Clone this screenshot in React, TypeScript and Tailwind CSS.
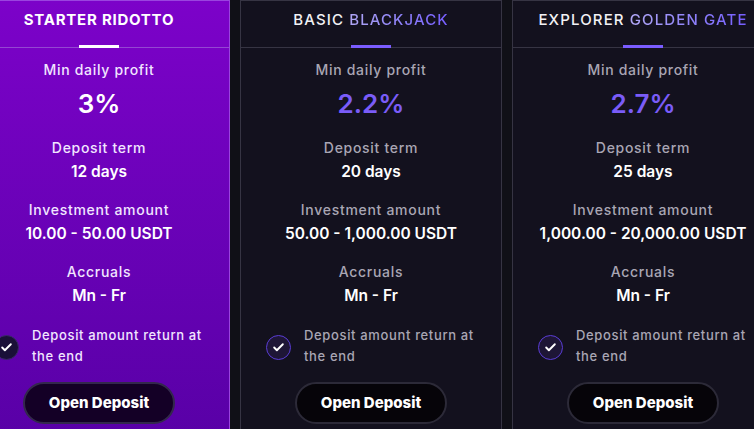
import { Check } from "lucide-react";

type Plan = {
  first: string;
  rest: string;
  profit: string;
  term: string;
  amount: string;
  active?: boolean;
};

const plans: Plan[] = [
  { first: "STARTER", rest: "RIDOTTO", profit: "3%", term: "12 days", amount: "10.00 - 50.00 USDT", active: true },
  { first: "BASIC", rest: "BLACKJACK", profit: "2.2%", term: "20 days", amount: "50.00 - 1,000.00 USDT" },
  { first: "EXPLORER", rest: "GOLDEN GATE", profit: "2.7%", term: "25 days", amount: "1,000.00 - 20,000.00 USDT" },
];

function Row({ label, value, active }: { label: string; value: string; active?: boolean }) {
  return (
    <div className="flex flex-col items-center gap-[4px] mt-[18px]">
      <div
        className={`text-[14px] leading-[20px] font-medium tracking-[0.05em] ${active ? "text-[#f1e6ff]" : "text-[#a9a6b4]"}`}
      >
        {label}
      </div>
      <div className="text-[15.5px] leading-[20px] font-semibold text-white">{value}</div>
    </div>
  );
}

function Card({ plan }: { plan: Plan }) {
  const a = plan.active;
  return (
    <div
      className={`w-[262px] shrink-0 h-[470px] border flex flex-col ${
        a
          ? "bg-gradient-to-b from-[#7c02c9] to-[#5600a4] border-[#9a44df]"
          : "bg-[#13111e] border-[#363443]"
      }`}
    >
      <div
        className={`relative h-[47px] flex justify-center pt-[9px] border-b ${
          a ? "border-[#9447d2]" : "border-[#363443]"
        }`}
      >
        {a ? (
          <div className="text-[15px] leading-[20px] font-bold tracking-[0.05em] text-white">
            {plan.first} {plan.rest}
          </div>
        ) : (
          <div className="text-[15px] leading-[20px] font-medium tracking-[0.075em] text-[#f2f2f5]">
            {plan.first}{" "}
            <span className="bg-gradient-to-r from-[#b0a6f4] to-[#765cff] bg-clip-text text-transparent">
              {plan.rest}
            </span>
          </div>
        )}
        <div
          className={`absolute bottom-[-1px] left-1/2 -translate-x-1/2 w-10 h-[3px] ${
            a ? "bg-white" : "bg-[#7a5cff]"
          }`}
        />
      </div>

      <div className="flex flex-col items-center pt-[12px]">
        <div
          className={`text-[14px] leading-[20px] font-medium tracking-[0.05em] ${a ? "text-[#f1e6ff]" : "text-[#a9a6b4]"}`}
        >
          Min daily profit
        </div>
        <div
          className={`mt-[8px] text-[26px] leading-[32px] font-semibold ${a ? "text-white" : "text-[#7a5cf8]"}`}
        >
          {plan.profit}
        </div>
      </div>

      <Row label="Deposit term" value={plan.term} active={a} />
      <Row label="Investment amount" value={plan.amount} active={a} />
      <Row label="Accruals" value="Mn - Fr" active={a} />

      <div className="flex items-start gap-[13px] pl-[25px] mt-[19px]">
        <div
          className={`mt-[10px] w-[25px] h-[25px] rounded-full border flex items-center justify-center shrink-0 ${
            a ? "bg-[#1a1038] border-[#3a2a6a]" : "bg-[#1e1636] border-[#5a3dd4]"
          }`}
        >
          <Check size={13} strokeWidth={3.5} className="text-white" />
        </div>
        <div
          className={`text-[13px] leading-[21px] font-medium tracking-[0.05em] ${a ? "text-[#f1e6ff]" : "text-[#a9a6b4]"}`}
        >
          Deposit amount return at
          <br />
          the end
        </div>
      </div>

      <div className="flex justify-center mt-[15px]">
        <button
          className={`w-[152px] h-[42px] rounded-full border-2 text-[15px] font-extrabold text-white ${
            a ? "bg-[#140026] border-[#33284c]" : "bg-[#060409] border-[#2c2a38]"
          }`}
        >
          Open Deposit
        </button>
      </div>
    </div>
  );
}

export default function App() {
  return (
    <div
      className="w-[754px] h-[429px] overflow-hidden bg-[#101017]"
      style={{ fontFamily: "Inter, 'Noto Sans', sans-serif" }}
    >
      <div className="flex gap-[10px] -ml-[32px]">
        {plans.map((p) => (
          <Card key={p.first} plan={p} />
        ))}
      </div>
    </div>
  );
}
